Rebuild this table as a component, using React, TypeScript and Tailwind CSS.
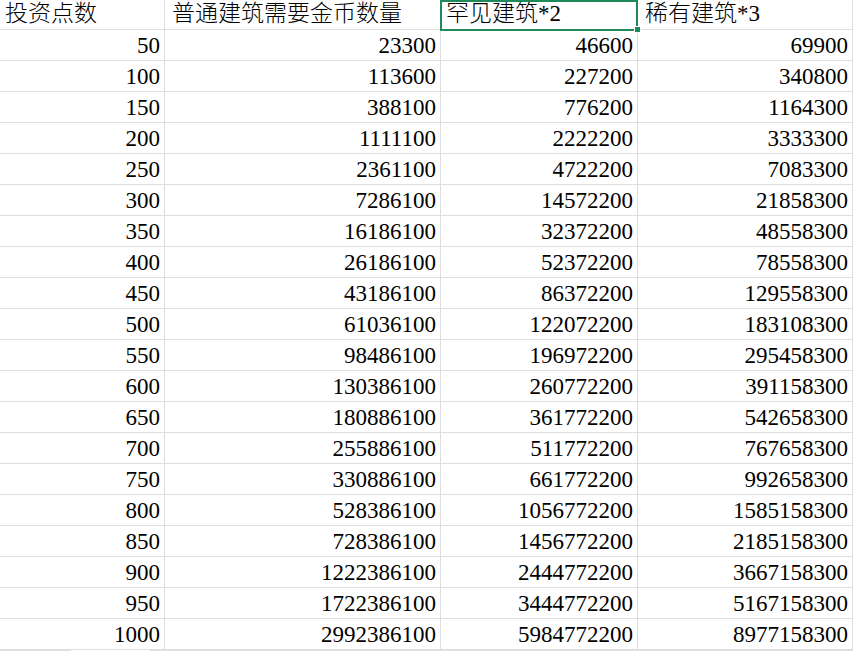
import React from "react";

const rows: [string, string, string, string][] = [
  ["50", "23300", "46600", "69900"],
  ["100", "113600", "227200", "340800"],
  ["150", "388100", "776200", "1164300"],
  ["200", "1111100", "2222200", "3333300"],
  ["250", "2361100", "4722200", "7083300"],
  ["300", "7286100", "14572200", "21858300"],
  ["350", "16186100", "32372200", "48558300"],
  ["400", "26186100", "52372200", "78558300"],
  ["450", "43186100", "86372200", "129558300"],
  ["500", "61036100", "122072200", "183108300"],
  ["550", "98486100", "196972200", "295458300"],
  ["600", "130386100", "260772200", "391158300"],
  ["650", "180886100", "361772200", "542658300"],
  ["700", "255886100", "511772200", "767658300"],
  ["750", "330886100", "661772200", "992658300"],
  ["800", "528386100", "1056772200", "1585158300"],
  ["850", "728386100", "1456772200", "2185158300"],
  ["900", "1222386100", "2444772200", "3667158300"],
  ["950", "1722386100", "3444772200", "5167158300"],
  ["1000", "2992386100", "5984772200", "8977158300"],
];

const widths = ["w-[165px]", "w-[276px]", "w-[197px]", "w-[215px]"];

export default function App() {
  return (
    <div className="w-[853px] h-[651px] bg-white overflow-hidden text-black font-['Liberation_Serif','Noto_Sans_CJK_SC',serif]">
      {/* header row */}
      <div className="flex h-[30px] border-b border-[#dedede] relative">
        <div className={`${widths[0]} shrink-0 border-r border-[#dedede] pl-[5px] text-[23px] leading-[27px] font-light`}>
          投资点数
        </div>
        <div className={`${widths[1]} shrink-0 border-r border-[#dedede] pl-[7px] text-[23px] leading-[27px] font-light`}>
          普通建筑需要金币数量
        </div>
        <div className={`${widths[2]} shrink-0 pl-[5px] text-[23px] leading-[27px] font-light`}>
          罕见建筑<span className="font-['Liberation_Serif',serif] font-normal">*2</span>
        </div>
        <div className={`${widths[3]} shrink-0 border-r border-[#dedede] pl-[7px] text-[23px] leading-[27px] font-light`}>
          稀有建筑<span className="font-['Liberation_Serif',serif] font-normal">*3</span>
        </div>
        <div className="absolute left-[440px] top-0 w-[198px] h-[31px] border-2 border-[#1e8a5a]" />
        <div className="absolute left-[634px] top-[26px] w-[7px] h-[7px] bg-[#1e8a5a] border border-white" />
      </div>
      {rows.map((r, i) => (
        <div key={i} className="flex h-[31px] border-b border-[#dedede]">
          {r.map((v, j) => (
            <div
              key={j}
              className={`${widths[j]} shrink-0 border-r border-[#dedede] text-right pr-[4px] pt-[4px] text-[23px] leading-[24px] font-['Liberation_Serif',serif]`}
            >
              {v}
            </div>
          ))}
        </div>
      ))}
      <div className="flex h-[2px]">
        <div className="w-[71px] bg-[#e6dcdc]" />
        <div className="w-[79px] bg-white" />
        <div className="flex-1 bg-[#e6dcdc]" />
      </div>
    </div>
  );
}
